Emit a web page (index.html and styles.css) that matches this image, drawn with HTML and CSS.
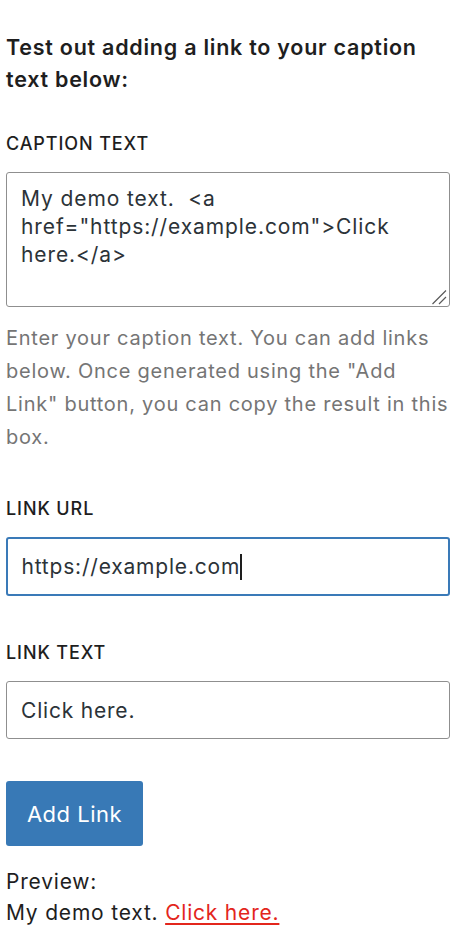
FILE: index.html
```html
<!DOCTYPE html>
<html lang="en">
<head>
<meta charset="utf-8">
<link rel="stylesheet" href="styles.css">
</head>
<body>
<main class="panel">
  <p class="intro">Test out adding a link to your caption text below:</p>

  <div class="field field-caption">
    <label class="label" for="caption">CAPTION TEXT</label>
    <div class="textarea" id="caption">My demo text.&nbsp; &lt;a href="https://example.com"&gt;Click here.&lt;/a&gt;<svg class="grip" width="16" height="16" viewBox="0 0 16 16"><path d="M15 1.5 L1.5 15 M15 8 L8 15" stroke="#5a5a5a" stroke-width="1.2" fill="none"/></svg></div>
    <p class="help">Enter your caption text. You can add links below. Once generated using the "Add Link" button, you can copy the result in this box.</p>
  </div>

  <div class="field field-url">
    <label class="label">LINK URL</label>
    <div class="input focused">https://example.com<span class="caret"></span></div>
  </div>

  <div class="field field-text">
    <label class="label">LINK TEXT</label>
    <div class="input">Click here.</div>
  </div>

  <button class="btn" type="button">Add Link</button>

  <div class="preview">
    <div>Preview:</div>
    <div>My demo text. <a href="#" class="plink">Click here.</a></div>
  </div>
</main>
</body>
</html>
```
FILE: styles.css
```css
html, body {
  margin: 0;
  padding: 0;
  background: #fff;
}
body {
  font-family: Inter, "Noto Sans", sans-serif;
  color: #1e1e1e;
}
.panel {
  display: flex;
  flex-direction: column;
  padding: 31px 6px 0 6px;
  width: 444px;
}
.intro {
  margin: 0;
  font-size: 21.5px;
  line-height: 32px;
  font-weight: 600;
  letter-spacing: 0.75px;
}
.field {
  display: flex;
  flex-direction: column;
}
.label {
  font-size: 18px;
  font-weight: 500;
  line-height: 24px;
  margin: 0 0 16px;
  letter-spacing: 0.9px;
}
.field-caption .label { margin-top: 37px; }
.field-url .label { margin-top: 43.5px; }
.field-text .label { margin-top: 45px; }
.textarea {
  position: relative;
  box-sizing: border-box;
  height: 135px;
  border: 1.5px solid #8f8f8f;
  border-radius: 3px;
  padding: 12px 14px;
  font-size: 21px;
  line-height: 28px;
  letter-spacing: 0.9px;
  color: #2c3338;
}
.grip {
  position: absolute;
  right: 2px;
  bottom: 1px;
}
.help {
  margin: 14.5px 0 0;
  font-size: 20px;
  line-height: 33px;
  letter-spacing: 0.75px;
  color: #757575;
}
.input {
  box-sizing: border-box;
  height: 58px;
  border: 1.5px solid #8f8f8f;
  border-radius: 3px;
  padding: 0 14px;
  display: flex;
  align-items: center;
  font-size: 21px;
  letter-spacing: 0.8px;
  color: #2c3338;
}
.input.focused {
  height: 59px;
  border: 2px solid #3a7ab8;
  padding: 0 13.5px;
}
.caret {
  display: inline-block;
  width: 2px;
  height: 26px;
  background: #1e1e1e;
}
.btn {
  align-self: flex-start;
  margin-top: 42px;
  width: 137px;
  height: 65px;
  border: 0;
  border-radius: 3px;
  background: #3879b6;
  color: #fff;
  font-family: inherit;
  font-size: 22px;
  letter-spacing: 0.5px;
  padding: 0;
}
.preview {
  margin-top: 19.5px;
  font-size: 21px;
  line-height: 31px;
  letter-spacing: 0.8px;
  color: #1e1e1e;
}
.plink {
  color: #e3261c;
  text-decoration: underline;
  text-underline-offset: 3px;
  text-decoration-thickness: 1.5px;
}
```
